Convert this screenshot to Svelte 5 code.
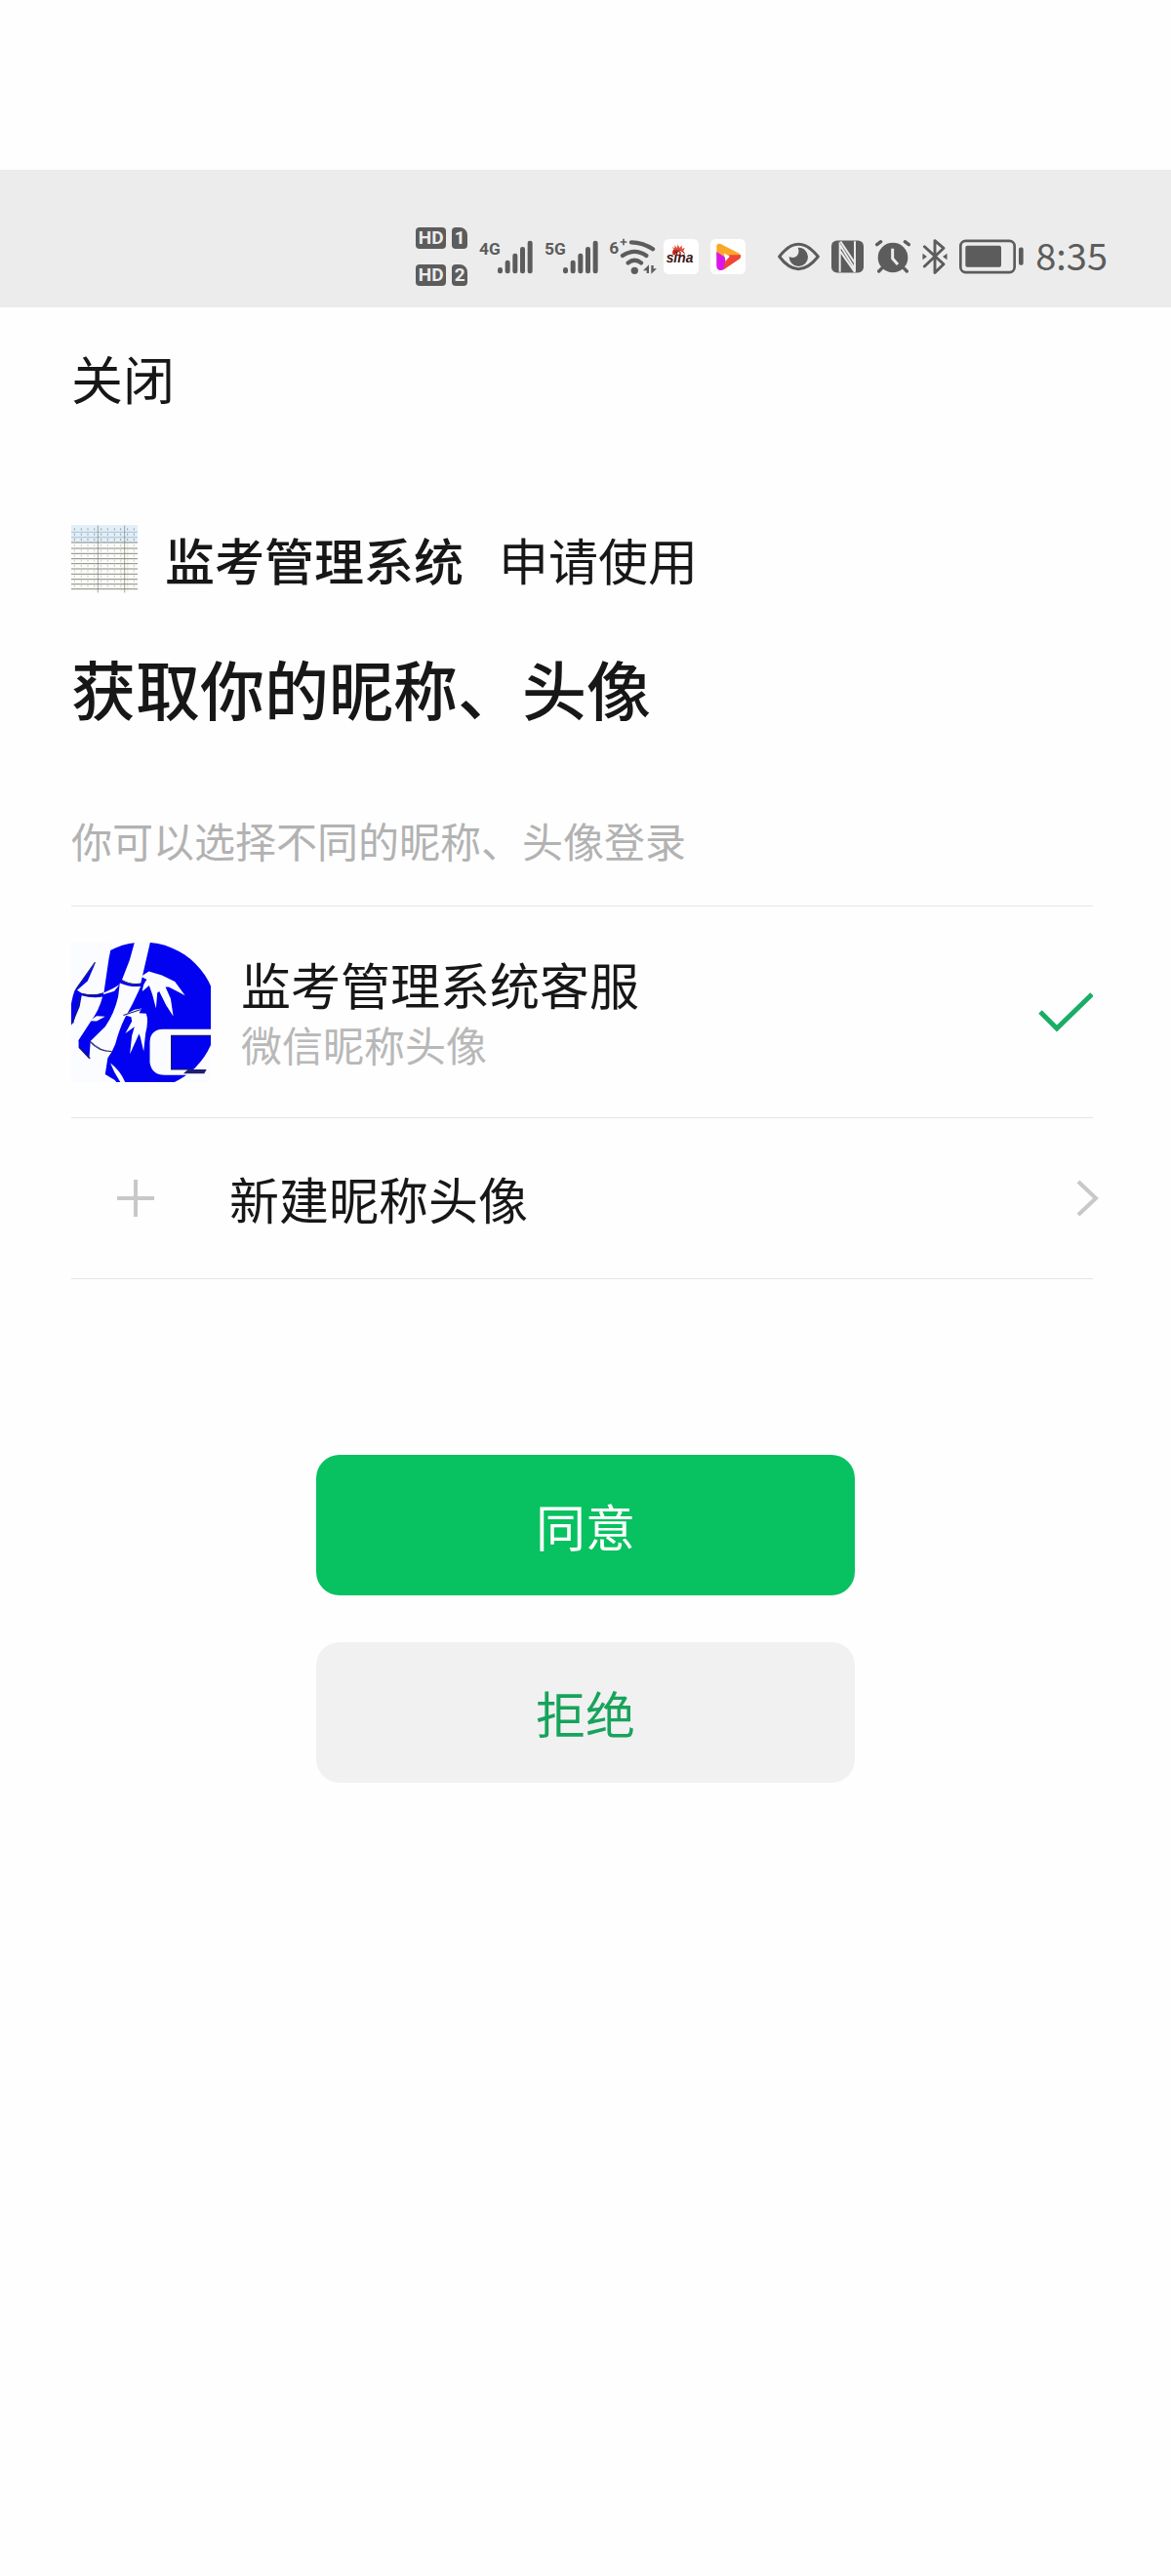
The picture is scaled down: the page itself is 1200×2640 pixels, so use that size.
<script>
  const appName = '监考管理系统';

  let accounts = [
    { id: 'wechat', name: '监考管理系统客服', source: '微信昵称头像' }
  ];
  let selected = 'wechat';

  const sims = ['1', '2'];
  const networks = ['4G', '5G'];

  // signal bars: x and top, all of them stand on y = 192
  const bars = [
    { x: 60, top: 174 },
    { x: 83, top: 152 },
    { x: 106, top: 131 },
    { x: 129, top: 111 },
    { x: 152, top: 92 }
  ];

  // grid lines of the spreadsheet logo
  const rows = [75, 91, 107, 125, 141, 157, 172, 188, 204, 220, 235, 250];
  const cells = [46, 67, 87, 107, 128, 148, 169, 188, 209, 229];
</script>

<header class="status-bar">
  <div class="sims">
    {#each sims as sim}
      <span class="hd">HD</span>
      <span class="sim">{sim}</span>
    {/each}
  </div>

  {#each networks as network}
    <svg class="signal" viewBox="0 87 165 108" aria-label="{network} signal">
      <text x="0" y="135">{network}</text>
      {#each bars as bar}
        <rect x={bar.x - 3} y={bar.top} width="15" height={193 - bar.top} rx="7" />
      {/each}
    </svg>
  {/each}

  <svg class="wifi" viewBox="640 87 129 108" aria-label="Wi-Fi">
    <text x="638" y="131">6</text>
    <path d="M672 96h20M682 86v20" stroke-width="5" />
    <path d="M706 97q37 1 66 21M679 138q37-25 73 0M696 160q20-16 40 0" stroke-width="13" stroke-linecap="round" />
    <circle class="solid" cx="716" cy="184" r="11" />
    <path class="solid" d="M742 184l18-18v26h-7v-8zM767 168v26l17-16h-10v-10z" />
  </svg>

  <svg class="app" viewBox="57 87 109 109" aria-label="Sina">
    <rect x="57" y="87" width="109" height="109" rx="16" fill="#fff" />
    <path d="M86 136q-6-22 17-18 22 4 20 20-5-15-19-15-10 2-10 13z" fill="#c22418" />
    <path d="M88 119l-4-8 8 5-1-10 8 8 2-10 6 10 7-8 0 11 9-3-4 9" fill="#e0523a" />
    <circle cx="103" cy="131" r="6" fill="none" stroke="#a32018" stroke-width="4" />
    <text class="sina" x="65" y="160">sina</text>
  </svg>

  <svg class="app" viewBox="200 87 109 109" aria-label="Video">
    <rect x="200" y="87" width="109" height="109" rx="16" fill="#fff" />
    <path d="M219 108q2-9 13-6l56 29q12 9 2 18l-30 18-40-26z" fill="#f9a72b" />
    <path d="M219 126l30 20-6 34q-8 7-18 2-6-3-6-12z" fill="#d916e8" />
    <path d="M294 136q2 8-6 14l-45 31q-5-5 3-20l12-25z" fill="#f0453a" />
    <path d="M242 131l18 10-13 14z" fill="#fff" />
  </svg>

  <svg class="eye" viewBox="408 97 129 90" aria-label="Eye comfort">
    <path d="M413 142q58-76 119 0-61 76-119 0z" stroke-width="9" stroke-linejoin="round" />
    <path class="solid" d="M470 114a29 29 0 1 1-27 28q14 7 24-2 9-10 3-26z" />
  </svg>

  <svg class="nfc" viewBox="573 93 99 99" aria-label="NFC">
    <rect class="solid" x="573" y="93" width="99" height="99" rx="17" />
    <path class="light" d="M599 190v-84l46 74V95M601 96l44 66M599 124l46 66" stroke-width="6" />
  </svg>

  <svg class="alarm" viewBox="708 93 108 100" aria-label="Alarm">
    <circle class="solid" cx="762" cy="146" r="46" />
    <path d="M713 106l12-9M811 106l-12-9M729 178l-10 10M795 178l10 10" stroke-width="10" stroke-linecap="round" />
    <path class="light" d="M761 118v31l16 18" stroke-width="9" />
  </svg>

  <svg class="bluetooth" viewBox="69 86 80 112" aria-label="Bluetooth">
    <path d="M76 110l61 56-28 27V91l28 24-61 58" stroke-width="9" stroke-linejoin="round" stroke-linecap="round" />
    <path class="solid" d="M70 132l14 10-14 10zM148 132l-14 10 14 10z" />
  </svg>

  <svg class="battery" viewBox="185 90 198 105" aria-label="Battery">
    <rect x="189" y="94" width="166" height="97" rx="16" stroke-width="8" />
    <rect class="solid" x="204" y="109" width="110" height="66" rx="6" />
    <rect class="solid" x="368" y="114" width="14" height="55" rx="6" />
  </svg>

  <time>8:35</time>
</header>

<main>
  <button class="close" type="button">关闭</button>

  <div class="applicant">
    <svg class="logo" viewBox="36 53 204 210" aria-hidden="true">
      <rect x="36" y="53" width="204" height="54" fill="#e2eff8" />
      <rect x="36" y="107" width="204" height="156" fill="#fdfdfb" />
      {#each cells as x}
        {#each rows as y, i}
          <path d="M{x} {y - 12}v6" stroke={i < 3 ? '#8ba0b2' : '#c9cbb8'} stroke-width="3" />
        {/each}
      {/each}
      <path d="M190 108v150M209 108v150" stroke="#f0f0d8" stroke-width="3" />
      {#each rows as y, i}
        <path d="M36 {y}h204" stroke={i < 2 ? '#93a9b8' : '#4d4f50'} stroke-width="2" />
      {/each}
      <path d="M118 55v206M200 55v206" stroke="#777b78" stroke-width="2" />
    </svg>
    <strong>{appName}</strong>
    <span>申请使用</span>
  </div>

  <h1>获取你的昵称、头像</h1>
  <p class="hint">你可以选择不同的昵称、头像登录</p>

  <div class="accounts">
    {#each accounts as account}
      <label class="account">
        <input type="radio" name="account" value={account.id} bind:group={selected} />
        <svg class="avatar" viewBox="40 48 428 428" aria-hidden="true">
          <circle cx="262" cy="272" r="225" fill="#0202f0" />
          <g fill="#fbfcff">
            <!-- left stalk -->
            <path d="M40 48h125l-10 52-15 102q-30 10-67 2l-15-10 32-28 26-60-60 82-20 22z" />
            <path d="M72 210q34 10 64 4-10 40-36 76l-38 58v24l-22 4V302l6-10 20-48z" />
            <path d="M138 203l30-14 20-12-16 20-32 10zM96 288l22-15 26 2-26 14z" />
            <!-- main stalk -->
            <path d="M234 48h48l-29 126q-28 6-58-10l24-62z" />
            <path d="M189 172q34 14 64 10-22 52-49 98-17 35-29 80l-10 22q-36-3-66-32l45-44q28-40 40-92z" />
            <path d="M99 352q28 28 66 30l-13 20-8 50 30 18 6 8H40V345l22 5v20l33 35z" />
            <path d="M160 418q30 22 46 60h-14q-20-28-32-60z" />
            <!-- leaves -->
            <path d="M254 152l24-16 40 12 40 20 31 42-50-26-10 0 16 36 8 54-22-34-21-42-6 4-4 48-11-42-10-28-21 18q2-24 14-36z" />
            <path d="M202 270l32-16 22-4-8 14 22 2q8 22-2 60l-6 56-10-44-4-10-28 62 6-56 8-28-28 20 20-36-2-14z" />
            <!-- laptop -->
            <path d="M468 314H320q-38 2-39 40v62q6 38 46 38h141V437H346V332h122z" />
            <path d="M468 365q-18 45-50 72l-38 39h88z" />
          </g>
          <g fill="none" stroke="#1c2050" stroke-width="3">
            <path d="M195 163q26 16 60 11M72 205q38 9 66-2M98 352q26 30 66 30M55 190l58-82M200 271l54-18" />
            <path d="M468 333H347v104h60" />
            <path d="M64 368l34 36M45 296l22-82" />
          </g>
          <path d="M398 437h57l-7 13h-64z" fill="#1c2070" />
        </svg>
        <span class="text">
          <span class="name">{account.name}</span>
          <span class="source">{account.source}</span>
        </span>
        {#if selected === account.id}
          <svg class="check" viewBox="0 0 56 42" aria-hidden="true">
            <path d="M2 20l17 17L55 2" />
          </svg>
        {/if}
      </label>
    {/each}

    <button class="create" type="button">
      <svg class="plus" viewBox="0 0 38 38" aria-hidden="true">
        <path d="M19 0v38M0 19h38" />
      </svg>
      <span>新建昵称头像</span>
      <svg class="chevron" viewBox="0 0 16 36" aria-hidden="true">
        <path d="M1 1l18 17L1 35" />
      </svg>
    </button>
  </div>

  <div class="actions">
    <button class="allow" type="button">同意</button>
    <button class="reject" type="button">拒绝</button>
  </div>
</main>

<style>
  :global(body) {
    margin: 0;
    background: #fefefe;
    color: #171717;
    font-family: 'Noto Sans CJK SC', sans-serif;
  }

  button {
    border: none;
    padding: 0;
    background: none;
    color: inherit;
    font: inherit;
    cursor: pointer;
  }

  .status-bar {
    display: flex;
    align-items: center;
    justify-content: flex-end;
    gap: 12px;
    margin-top: 174px;
    padding: 59px 65px 22px 0;
    background: #ececec;
    color: #5c5c5c;
  }

  .status-bar svg {
    flex: none;
    height: 36px;
    overflow: visible;
    fill: none;
    stroke: #5c5c5c;
    stroke-width: 0;
  }

  .status-bar text,
  .status-bar .solid,
  .signal rect {
    fill: #5c5c5c;
    stroke: none;
  }

  .status-bar text {
    font: bold 52px Roboto, sans-serif;
  }

  .status-bar .light {
    stroke: #ececec;
  }

  .status-bar .sina {
    font: italic bold 42px 'Liberation Sans', sans-serif;
    fill: #3a1512;
  }

  .sims {
    display: grid;
    grid-template-columns: 31px 16px;
    gap: 16px 6px;
  }

  .hd,
  .sim {
    border-radius: 4px;
    background: #5c5c5c;
    color: #ececec;
    font: bold 19px/22px Roboto, sans-serif;
    text-align: center;
  }

  .sim {
    border-top-right-radius: 8px;
  }

  .signal {
    width: 55px;
  }

  .wifi {
    width: 43px;
  }

  .app {
    width: 36px;
  }

  .eye {
    width: 43px;
    margin-left: 21px;
  }

  .nfc {
    width: 33px;
  }

  .alarm {
    width: 36px;
  }

  .bluetooth {
    width: 26px;
  }

  .battery {
    width: 66px;
  }

  time {
    font-size: 38px;
    line-height: 56px;
    padding-bottom: 4px;
  }

  main {
    padding: 42px 80px 80px 73px;
  }

  .close {
    display: block;
    font-size: 53px;
    line-height: 60px;
  }

  .applicant {
    display: flex;
    align-items: center;
    margin-top: 121px;
    font-size: 51px;
    line-height: 70px;
  }

  .logo {
    width: 68px;
    height: 70px;
    margin-right: 28px;
  }

  .applicant strong {
    margin-right: 36px;
    font-weight: 500;
  }

  h1 {
    margin: 56px 0 0;
    font-size: 66px;
    font-weight: 500;
    line-height: 80px;
  }

  .hint {
    margin: 87px 0 37px;
    color: #b2b2b2;
    font-size: 42px;
    line-height: 60px;
  }

  .accounts {
    border-top: 1px solid #e5e5e5;
  }

  .account,
  .create {
    display: flex;
    align-items: center;
    box-sizing: border-box;
    width: 100%;
    border-bottom: 1px solid #e5e5e5;
    text-align: left;
    cursor: pointer;
  }

  .account {
    padding: 37px 0 36px;
  }

  .account input {
    position: absolute;
    opacity: 0;
  }

  .avatar {
    width: 143px;
    height: 143px;
    margin-right: 31px;
  }

  .text {
    display: flex;
    flex: 1;
    flex-direction: column;
  }

  .name,
  .create {
    font-size: 51px;
    line-height: 64px;
  }

  .source {
    color: #b8b8b8;
    font-size: 42px;
    line-height: 60px;
  }

  .check {
    width: 56px;
    height: 42px;
    fill: none;
    stroke: #1aad66;
    stroke-width: 5;
  }

  .create {
    padding: 50px 0;
  }

  .create span {
    flex: 1;
  }

  .plus,
  .chevron {
    overflow: visible;
    fill: none;
    stroke: #c8c8c8;
    stroke-width: 4;
  }

  .plus {
    width: 38px;
    height: 38px;
    margin: 0 77px 0 47px;
  }

  .chevron {
    width: 16px;
    height: 36px;
  }

  .actions {
    display: flex;
    flex-direction: column;
    align-items: center;
    gap: 48px;
    padding: 180px 0 0 7px;
  }

  .actions button {
    width: 552px;
    border-radius: 24px;
    font-size: 51px;
    line-height: 144px;
  }

  .allow {
    background: #08c160;
    color: #fff;
  }

  .reject {
    background: #f1f1f1;
    color: #17a35b;
  }
</style>
